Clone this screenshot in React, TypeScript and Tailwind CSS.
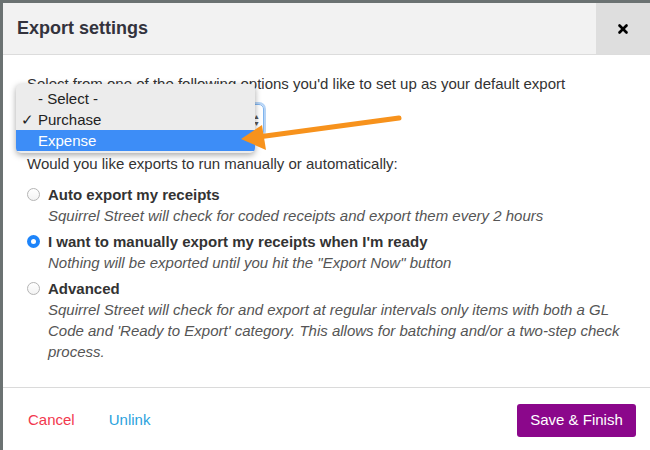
import { X } from "lucide-react";

const options = [
  {
    label: "Auto export my receipts",
    desc: ["Squirrel Street will check for coded receipts and export them every 2 hours"],
    checked: false,
  },
  {
    label: "I want to manually export my receipts when I'm ready",
    desc: ['Nothing will be exported until you hit the "Export Now" button'],
    checked: true,
  },
  {
    label: "Advanced",
    desc: [
      "Squirrel Street will check for and export at regular intervals only items with both a GL",
      "Code and 'Ready to Export' category. This allows for batching and/or a two-step check",
      "process.",
    ],
    checked: false,
  },
];

function Radio({ checked }: { checked: boolean }) {
  return checked ? (
    <span className="mt-[4px] flex size-[13px] shrink-0 items-center justify-center rounded-full bg-[#1d84fa]">
      <span className="size-[5px] rounded-full bg-white" />
    </span>
  ) : (
    <span className="mt-[4px] size-[13px] shrink-0 rounded-full border border-[#b5b5b5] bg-gradient-to-b from-white to-[#f3f3f3]" />
  );
}

export default function App() {
  return (
    <div
      className="relative h-[450px] w-[650px] overflow-hidden bg-[#6b7272] pl-[3px] pt-[3px]"
      style={{ fontFamily: '"Liberation Sans", Arial, sans-serif' }}
    >
      <div className="flex h-full flex-col bg-white">
        <header className="flex h-[52px] shrink-0 border-b border-[#dcdcdc] bg-[#f2f2f2]">
          <h2 className="flex flex-1 items-center pl-[14px] text-[18px] font-bold text-[#33333d]">
            Export settings
          </h2>
          <button className="flex w-[54px] items-center justify-center bg-[#dedede]">
            <X className="size-[14px] text-black" strokeWidth={4.5} />
          </button>
        </header>

        <div className="relative flex-1 pl-[24px] pt-[18px] text-[15px] leading-[21px] text-[#333]">
          <p>Select from one of the following options you'd like to set up as your default export</p>

          <div className="mt-[10px] flex h-[32px] w-[237px] items-center justify-end rounded-[5px] border border-[#7fb4ee] pr-[3px] shadow-[0_0_0_2px_#b6d4f6]">
            <span className="flex flex-col text-[7px] leading-[7px] text-[#555]">
              <span>▲</span>
              <span>▼</span>
            </span>
          </div>

          <p className="mt-[17px]">Would you like exports to run manually or automatically:</p>

          <div className="mt-[10px] flex flex-col gap-[5px]">
            {options.map((o) => (
              <div key={o.label} className="flex gap-[8px]">
                <Radio checked={o.checked} />
                <div>
                  <div className="font-bold text-[#333]">{o.label}</div>
                  {o.desc.map((d) => (
                    <div key={d} className="italic text-[#555]">
                      {d}
                    </div>
                  ))}
                </div>
              </div>
            ))}
          </div>

          <div className="absolute left-[13px] top-[29px] w-[239px] overflow-hidden rounded-[5px] bg-[#ececec] pb-[2px] pt-[4px] text-[15px] leading-[21px] text-[#222] shadow-[0_2px_6px_rgba(0,0,0,0.35)]">
            <div className="pl-[22px]">- Select -</div>
            <div className="relative pl-[22px]">
              <span className="absolute left-[5px]">✓</span>
              Purchase
            </div>
            <div className="bg-[#3d8df7] pl-[22px] text-white">Expense</div>
          </div>
        </div>

        <footer className="flex h-[63px] shrink-0 items-center border-t border-[#dadada] pl-[25px] pr-[14px] pt-[2px] text-[15px]">
          <button className="text-[#f2384d]">Cancel</button>
          <button className="ml-[34px] text-[#2aa2dd]">Unlink</button>
          <button className="ml-auto h-[33px] w-[119px] rounded-[3px] bg-[#8b078b] text-[15px] text-white">
            Save &amp; Finish
          </button>
        </footer>
      </div>

      <svg className="absolute left-0 top-0" width="650" height="450" viewBox="0 0 650 450">
        <line x1="399" y1="118" x2="258" y2="137" stroke="#f7921c" strokeWidth="5" strokeLinecap="round" />
        <polygon points="241,139 262,125 266,150" fill="#f7921c" />
      </svg>
    </div>
  );
}
